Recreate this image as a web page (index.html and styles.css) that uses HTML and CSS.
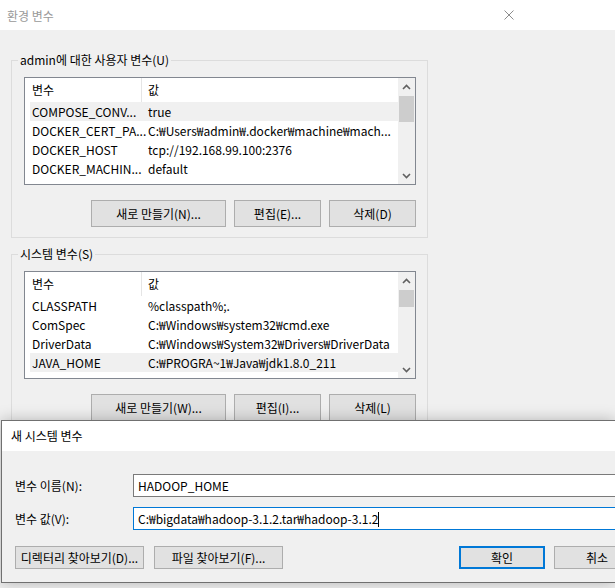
FILE: index.html
```html
<!DOCTYPE html>
<html>
  <head>
    <meta charset="utf-8" />
    <title>환경 변수</title>
    <link rel="stylesheet" href="styles.css">
  </head>
  <body>
    <div class="env-window">
      <div class="titlebar">
        <span class="titlebar-text">환경 변수</span>
        <svg class="close-icon" width="10" height="10" viewBox="0 0 10 10">
          <path d="M0.5 0.5 L9.5 9.5 M9.5 0.5 L0.5 9.5" stroke="#8c8c8c" stroke-width="1" fill="none" />
        </svg>
      </div>

      <div class="env-body">
        <!-- User variables -->
        <fieldset class="group">
          <legend>admin에 대한 사용자 변수(U)</legend>
          <div class="list">
            <div class="list-rows">
              <div class="list-header"><span class="col-name">변수</span><span class="col-value">값</span></div>
              <div class="list-row selected"><span class="col-name">COMPOSE_CONV...</span><span class="col-value">true</span></div>
              <div class="list-row"><span class="col-name">DOCKER_CERT_PA...</span><span class="col-value">C:₩Users₩admin₩.docker₩machine₩mach...</span></div>
              <div class="list-row"><span class="col-name">DOCKER_HOST</span><span class="col-value">tcp://192.168.99.100:2376</span></div>
              <div class="list-row"><span class="col-name">DOCKER_MACHIN...</span><span class="col-value">default</span></div>
            </div>
            <div class="scrollbar">
              <div class="scroll-arrow">
                <svg width="9" height="6" viewBox="0 0 9 6"><path d="M1 5 L4.5 1.5 L8 5" stroke="#606060" stroke-width="1.6" fill="none" /></svg>
              </div>
              <div class="scroll-track"><div class="scroll-thumb"></div></div>
              <div class="scroll-arrow">
                <svg width="9" height="6" viewBox="0 0 9 6"><path d="M1 1 L4.5 4.5 L8 1" stroke="#606060" stroke-width="1.6" fill="none" /></svg>
              </div>
            </div>
          </div>
          <div class="group-buttons">
            <button class="btn btn-new">새로 만들기(N)...</button>
            <button class="btn">편집(E)...</button>
            <button class="btn">삭제(D)</button>
          </div>
        </fieldset>

        <!-- System variables -->
        <fieldset class="group">
          <legend>시스템 변수(S)</legend>
          <div class="list">
            <div class="list-rows">
              <div class="list-header"><span class="col-name">변수</span><span class="col-value">값</span></div>
              <div class="list-row"><span class="col-name">CLASSPATH</span><span class="col-value">%classpath%;.</span></div>
              <div class="list-row"><span class="col-name">ComSpec</span><span class="col-value">C:₩Windows₩system32₩cmd.exe</span></div>
              <div class="list-row"><span class="col-name">DriverData</span><span class="col-value">C:₩Windows₩System32₩Drivers₩DriverData</span></div>
              <div class="list-row selected"><span class="col-name">JAVA_HOME</span><span class="col-value">C:₩PROGRA~1₩Java₩jdk1.8.0_211</span></div>
            </div>
            <div class="scrollbar">
              <div class="scroll-arrow">
                <svg width="9" height="6" viewBox="0 0 9 6"><path d="M1 5 L4.5 1.5 L8 5" stroke="#606060" stroke-width="1.6" fill="none" /></svg>
              </div>
              <div class="scroll-track"><div class="scroll-thumb small"></div></div>
              <div class="scroll-arrow">
                <svg width="9" height="6" viewBox="0 0 9 6"><path d="M1 1 L4.5 4.5 L8 1" stroke="#606060" stroke-width="1.6" fill="none" /></svg>
              </div>
            </div>
          </div>
          <div class="group-buttons">
            <button class="btn btn-new">새로 만들기(W)...</button>
            <button class="btn">편집(I)...</button>
            <button class="btn">삭제(L)</button>
          </div>
        </fieldset>
      </div>
    </div>

    <!-- New system variable dialog, on top of the parent window -->
    <div class="dialog">
      <div class="dialog-titlebar">새 시스템 변수</div>
      <div class="dialog-body">
        <div class="field-row">
          <label class="field-label">변수 이름(N):</label>
          <div class="text-input">HADOOP_HOME</div>
        </div>
        <div class="field-row">
          <label class="field-label">변수 값(V):</label>
          <div class="text-input focused">C:₩bigdata₩hadoop-3.1.2.tar₩hadoop-3.1.2<span class="caret"></span></div>
        </div>
        <div class="dialog-buttons">
          <button class="btn btn-browse">디렉터리 찾아보기(D)...</button>
          <button class="btn btn-browse">파일 찾아보기(F)...</button>
          <span class="spacer"></span>
          <button class="btn btn-ok">확인</button>
          <button class="btn btn-cancel">취소</button>
        </div>
      </div>
    </div>
  </body>
</html>
```

FILE: styles.css
```css
body {
  font-family: "Noto Sans CJK KR", sans-serif;
  font-size: 12px;
  color: #000;
  margin: 0;
  padding: 0;
  width: 615px;
  height: 588px;
  overflow: hidden;
  background-color: #f0f0f0;
  position: relative;
}

/* Parent window */
.titlebar {
  height: 30px;
  background-color: #fff;
  display: flex;
  align-items: center;
  justify-content: space-between;
  padding: 0 101px 0 7px;
}

.titlebar-text {
  color: #999;
}

.close-icon {
  display: block;
}

.env-body {
  padding-left: 11px;
}

/* Group boxes */
.group {
  width: 417px;
  box-sizing: border-box;
  min-width: 0;
  margin: 8px 0 0 0;
  padding: 9px 11px 10px 12px;
  border: 1px solid #dcdcdc;
}

.group:first-child {
  margin-top: 22px;
}

.group legend {
  line-height: 16px;
  padding: 0 2px;
  margin-left: -6px;
}

/* List view */
.list {
  display: flex;
  height: 108px;
  box-sizing: border-box;
  border: 1px solid #828790;
  background-color: #fff;
}

.list-rows {
  flex: 1;
  padding-left: 5px;
}

.list-header,
.list-row {
  display: flex;
  white-space: nowrap;
}

.list-header {
  height: 24px;
  line-height: 24px;
}

.list-row {
  height: 19px;
  line-height: 19px;
}

.list-row.selected {
  background-color: #f0f0f0;
}

.col-name {
  width: 110px;
  padding-left: 2px;
  flex-shrink: 0;
}

.list-header .col-name {
  width: 109px;
  border-right: 1px solid #e5e5e5;
}

.col-value {
  padding-left: 6px;
}

.scrollbar {
  width: 17px;
  display: flex;
  flex-direction: column;
  background-color: #f0f0f0;
}

.scroll-arrow {
  height: 17px;
  display: flex;
  align-items: center;
  justify-content: center;
}

.scroll-track {
  flex: 1;
}

.scroll-thumb {
  margin: 1px 1px 0 1px;
  height: 26px;
  background-color: #cdcdcd;
}

.scroll-thumb.small {
  height: 17px;
}

.group-buttons {
  display: flex;
  justify-content: flex-end;
  gap: 8px;
  margin-top: 15px;
}

/* Buttons */
.btn {
  font-family: inherit;
  font-size: 12px;
  color: #000;
  background-color: #e1e1e1;
  border: 1px solid #adadad;
  padding: 0;
  margin: 0;
  height: 27px;
  width: 87px;
  box-sizing: border-box;
  flex-shrink: 0;
}

.btn-new {
  width: 135px;
}

/* New system variable dialog (runs off the right edge of the screen) */
.dialog {
  position: absolute;
  left: 1px;
  top: 420px;
  width: 614px;
  height: 163px;
  box-sizing: border-box;
  border: 1px solid #707070;
  border-right: none;
  overflow: hidden;
  background-color: #f0f0f0;
  box-shadow: 0 0 14px rgba(0, 0, 0, 0.25);
}

.dialog-titlebar {
  height: 30px;
  line-height: 30px;
  background-color: #fff;
  padding-left: 9px;
}

.dialog-body {
  width: 650px;
  box-sizing: border-box;
  padding: 23px 12px 0 13px;
}

.field-row {
  display: flex;
  align-items: center;
  margin-bottom: 10px;
}

.field-label {
  width: 118px;
  flex-shrink: 0;
}

.text-input {
  width: 507px;
  flex-shrink: 0;
  height: 23px;
  line-height: 21px;
  box-sizing: border-box;
  border: 1px solid #7a7a7a;
  background-color: #fff;
  padding: 0 4px;
  white-space: nowrap;
}

.text-input.focused {
  border-color: #0078d7;
}

.caret {
  display: inline-block;
  width: 1px;
  height: 15px;
  background-color: #000;
  vertical-align: -3px;
}

.dialog-buttons {
  display: flex;
  margin-top: 16px;
}

.dialog-buttons .btn {
  height: 23px;
}

.btn-browse {
  width: 129px;
  margin-right: 10px;
}

.spacer {
  flex: 1;
}

.btn-ok {
  width: 86px;
  margin-right: 9px;
  border: 2px solid #0078d7;
}

.btn-cancel {
  width: 86px;
}
```
